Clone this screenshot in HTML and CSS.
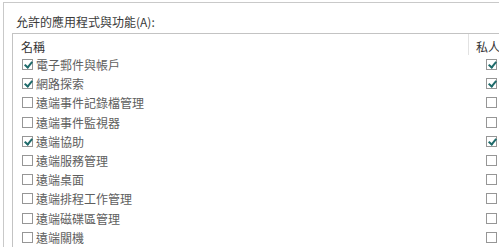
FILE: index.html
```html
<!DOCTYPE html>
<html>
<head>
<meta charset="utf-8">
<link rel="stylesheet" href="styles.css">
</head>
<body>
<div class="panel">
  <div class="title">允許的應用程式與功能(A):</div>
  <div class="list">
    <div class="row head">
      <div class="name">名稱</div>
      <div class="col">私人</div>
    </div>
    <div class="row"><div class="name"><span class="cb on"></span>電子郵件與帳戶</div><div class="col"><span class="cb on"></span></div></div>
    <div class="row"><div class="name"><span class="cb on"></span>網路探索</div><div class="col"><span class="cb on"></span></div></div>
    <div class="row"><div class="name"><span class="cb"></span>遠端事件記錄檔管理</div><div class="col"><span class="cb"></span></div></div>
    <div class="row"><div class="name"><span class="cb"></span>遠端事件監視器</div><div class="col"><span class="cb"></span></div></div>
    <div class="row"><div class="name"><span class="cb on"></span>遠端協助</div><div class="col"><span class="cb on"></span></div></div>
    <div class="row"><div class="name"><span class="cb"></span>遠端服務管理</div><div class="col"><span class="cb"></span></div></div>
    <div class="row"><div class="name"><span class="cb"></span>遠端桌面</div><div class="col"><span class="cb"></span></div></div>
    <div class="row"><div class="name"><span class="cb"></span>遠端排程工作管理</div><div class="col"><span class="cb"></span></div></div>
    <div class="row"><div class="name"><span class="cb"></span>遠端磁碟區管理</div><div class="col"><span class="cb"></span></div></div>
    <div class="row"><div class="name"><span class="cb"></span>遠端關機</div><div class="col"><span class="cb"></span></div></div>
  </div>
</div>
</body>
</html>
```
FILE: styles.css
```css
html, body {
  margin: 0;
  padding: 0;
  background: #ffffff;
  overflow: hidden;
  width: 499px;
  height: 247px;
}
body {
  font-family: "Noto Sans CJK TC", "Noto Sans", sans-serif;
  font-size: 12px;
  color: #333333;
}
.panel {
  margin: 2px 0 0 3px;
  border-top: 1px solid #c9c9c9;
  border-left: 1px solid #c9c9c9;
  height: 244px;
  overflow: hidden;
}
.title {
  padding: 10px 0 0 12px;
  height: 20px;
  line-height: 17px;
  color: #3a3a3a;
}
.list {
  margin-left: 8px;
  border-top: 1px solid #c3c3c3;
  border-left: 1px solid #c3c3c3;
  display: flex;
  flex-direction: column;
}
.row {
  display: grid;
  grid-template-columns: 1fr 31px;
  height: 19.2px;
  flex: none;
  align-items: center;
  color: #5e5e5e;
}
.row.head {
  height: 21px;
  align-items: stretch;
  color: #333333;
}
.row.head .name {
  padding: 4px 0 0 8px;
  line-height: 16px;
}
.row.head .col {
  border-left: 1px solid #e2e2e2;
  padding: 4px 0 0 7px;
  line-height: 16px;
  white-space: nowrap;
  overflow: hidden;
}
.name {
  display: flex;
  align-items: center;
  padding-left: 9px;
  white-space: nowrap;
}
.col {
  display: flex;
  align-items: center;
  padding-left: 18px;
}
.cb {
  box-sizing: border-box;
  width: 11px;
  height: 11px;
  border: 1px solid #969696;
  background: #fff;
  margin-right: 3px;
  position: relative;
  flex: none;
}
.cb.on::after {
  content: "";
  position: absolute;
  left: 3px;
  top: 0px;
  width: 3px;
  height: 6px;
  border-right: 2px solid #1f6b6b;
  border-bottom: 2px solid #1f6b6b;
  transform: rotate(40deg);
}
```
